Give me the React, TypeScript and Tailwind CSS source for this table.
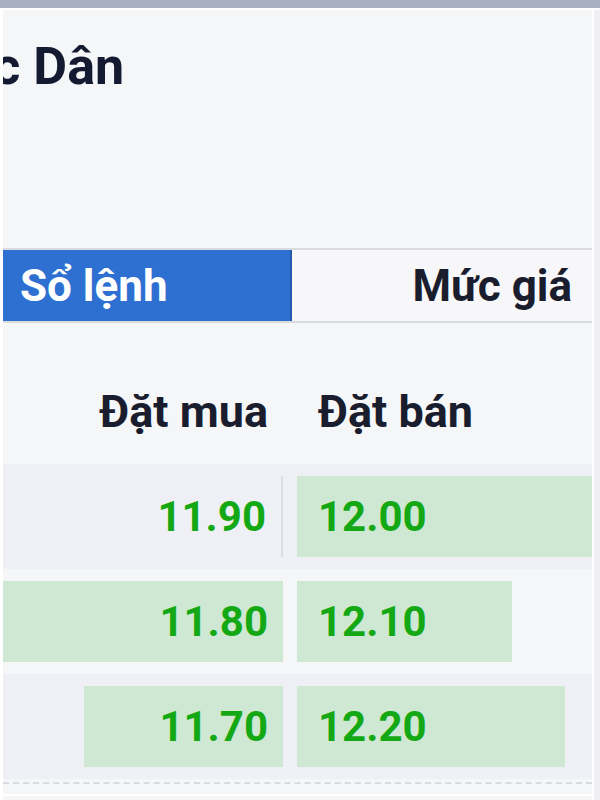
import React from 'react';

type Row = { bid: string; ask: string; bidW: number; askW: number; striped: boolean; divider?: boolean };

const rows: Row[] = [
  { bid: '11.90', ask: '12.00', bidW: 0, askW: 100, striped: true, divider: true },
  { bid: '11.80', ask: '12.10', bidW: 100, askW: 73, striped: false },
  { bid: '11.70', ask: '12.20', bidW: 71, askW: 91, striped: true },
];

export default function App() {
  return (
    <div
      className="w-[600px] h-[800px] overflow-hidden bg-[#eef0f3] flex flex-col"
      style={{ fontFamily: 'Roboto, "Liberation Sans", Arial, sans-serif' }}
    >
      {/* thanh trên */}
      <div className="h-[8px] bg-[#a9b0c0] shrink-0" />
      <div className="h-[2px] bg-white shrink-0" />

      <div className="flex flex-1 min-h-0">
        <div className="w-[3px] bg-white shrink-0" />
        <div className="w-[589px] bg-[#f5f6f8] flex flex-col overflow-hidden">
          {/* Tiêu đề */}
          <div className="h-[238px] shrink-0 overflow-hidden">
            <h1 className="whitespace-nowrap text-[52px] font-bold text-[#151a33] mt-[31px] ml-[-104px] leading-none">
              Quốc Dân
            </h1>
          </div>

          {/* Tabs */}
          <div className="flex h-[75px] shrink-0 border-t-2 border-b-2 border-[#d9dbdf]">
            <div className="w-[289px] bg-[#2e6fd2] border-r-2 border-[#2459ad] flex items-center pl-[17px]">
              <span className="text-white font-bold text-[44px] leading-none">Sổ lệnh</span>
            </div>
            <div className="flex-1 bg-[#f7f7f9] flex items-center justify-end pr-[20px]">
              <span className="text-[#1a1d2e] font-bold text-[44px] leading-none">Mức giá</span>
            </div>
          </div>

          {/* Header */}
          <div className="flex h-[141px] shrink-0 items-center pt-[35px]">
            <div className="w-[280px] text-right pr-[15px] font-bold text-[45px] leading-none text-[#1a1d2e]">Đặt mua</div>
            <div className="w-[14px]" />
            <div className="flex-1 pl-[21px] font-bold text-[45px] leading-none text-[#1a1d2e]">Đặt bán</div>
          </div>

          {/* Rows */}
          <div className="flex flex-col">
            {rows.map((r, i) => (
              <div
                key={i}
                className={`flex h-[105px] py-[12px] ${r.striped ? 'bg-[#eff0f6]' : 'bg-[#f5f6f8]'}`}
              >
                <div className={`w-[280px] relative flex items-center justify-end ${r.divider ? 'border-r-2 border-[#dcdee3]' : ''}`}>
                  <div className="absolute inset-y-0 right-0 bg-[#cfe8d4]" style={{ width: `${r.bidW}%` }} />
                  <span className="relative pr-[15px] font-bold text-[42px] text-[#15a815] leading-none">{r.bid}</span>
                </div>
                <div className="w-[14px]" />
                <div className="flex-1 relative flex items-center">
                  <div className="absolute inset-y-0 left-0 bg-[#cfe8d4]" style={{ width: `${r.askW}%` }} />
                  <span className="relative pl-[21px] font-bold text-[42px] text-[#15a815] leading-none">{r.ask}</span>
                </div>
              </div>
            ))}
          </div>
          <div className="border-t-2 border-dashed border-[#d9dbe0] mt-[3px]" />
          <div className="h-[10px]" />
          <div className="h-[2px] bg-white" />
        </div>
        <div className="w-[2px] bg-white shrink-0" />
      </div>
    </div>
  );
}
